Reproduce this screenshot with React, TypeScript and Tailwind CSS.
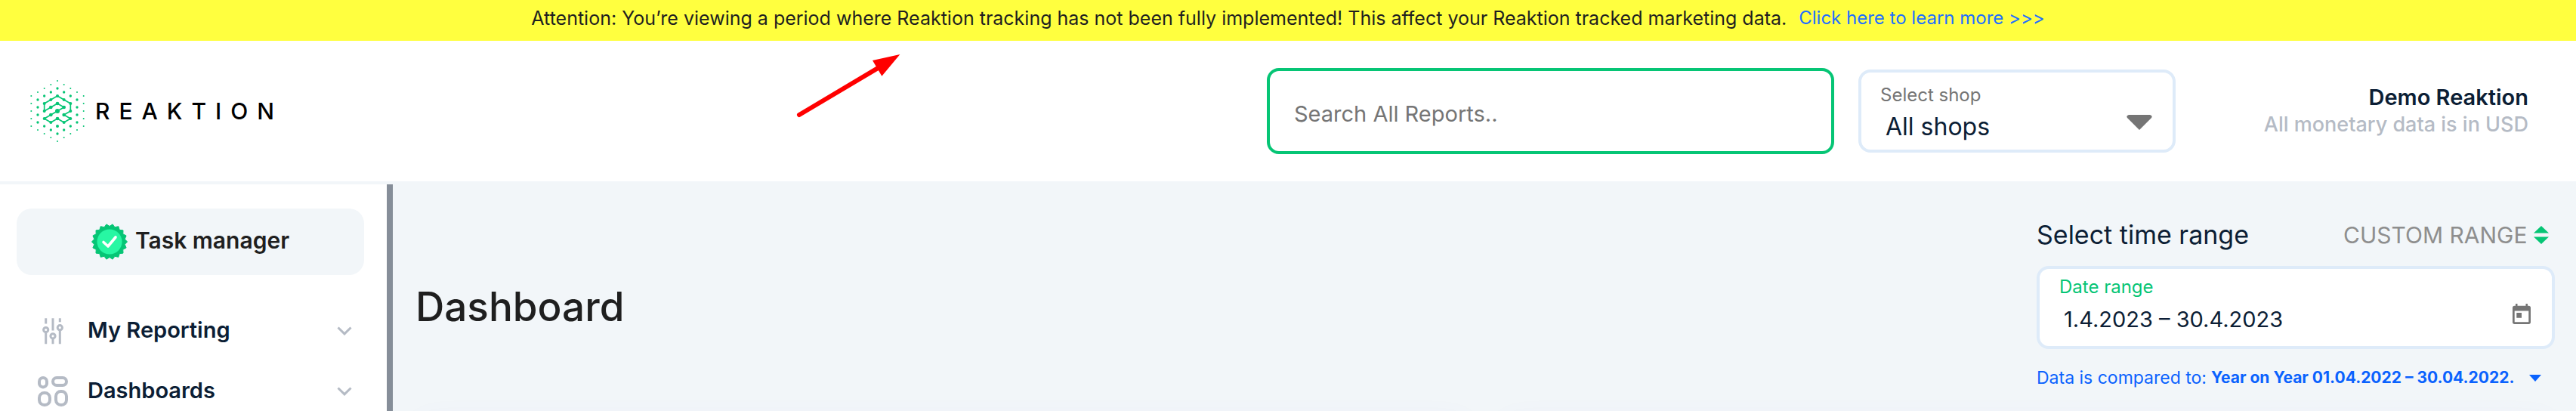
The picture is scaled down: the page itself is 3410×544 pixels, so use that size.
import { ReactNode } from "react";

const LOGO_PATH =
  "M70 135V105L96 90L122 75L148 90L174 105V135L148 150L174 165L148 180L122 165L96 180L70 165L96 150L122 135L148 120L122 105L96 120Z";

const logoDots = () => {
  const dots: { x: number; y: number; r: number }[] = [];
  for (let col = -4; col <= 4; col++) {
    const reach = 120 - Math.abs(col) * 15;
    for (let dy = -reach; dy <= reach; dy += 30) {
      const ring = Math.max(Math.abs(col), (Math.abs(dy) + Math.abs(col) * 15) / 30);
      dots.push({ x: 122 + col * 26, y: 135 + dy, r: [9, 7, 6, 5, 3][Math.round(ring)] });
    }
  }
  return dots;
};

const Logo = () => (
  <a href="#" className="flex items-center gap-[14px] text-black">
    <svg width="72" height="82" viewBox="14 12 216 246" aria-hidden="true">
      <path d={LOGO_PATH} fill="none" stroke="#06c575" strokeWidth="5" strokeLinejoin="round" />
      {logoDots().map((dot) => (
        <circle key={`${dot.x}-${dot.y}`} cx={dot.x} cy={dot.y} r={dot.r} fill="#06c575" />
      ))}
    </svg>
    <span className="text-3xl leading-9 font-medium tracking-[12px]">REAKTION</span>
  </a>
);

const badgePoints = Array.from({ length: 36 }, (_, i) => {
  const angle = (i * Math.PI) / 18;
  const radius = i % 2 === 0 ? 23.5 : 20.5;
  return `${24 + radius * Math.cos(angle)},${24 + radius * Math.sin(angle)}`;
}).join(" ");

const TaskBadge = () => (
  <svg width="48" height="48" viewBox="0 0 48 48" aria-hidden="true">
    <polygon points={badgePoints} fill="#06c575" stroke="#06c575" strokeLinejoin="round" />
    <circle cx="24" cy="24" r="16.5" fill="#27f7a3" />
    <path d="M16 24.5L22 30L32 18" fill="none" stroke="#fff" strokeWidth="3.6" strokeLinecap="round" strokeLinejoin="round" />
  </svg>
);

const SlidersIcon = () => (
  <svg width="40" height="40" viewBox="0 0 40 40" fill="none" stroke="#b5bbc5" strokeWidth="3" aria-hidden="true">
    <path d="M10.7 3.3V10.5M10.7 22V37.3M20 3.3V19.5M20 30.5V37.3M29.3 3.3V8.3M29.3 19V37.3" />
    <circle cx="10.7" cy="18.5" r="3.1" />
    <circle cx="20" cy="26.8" r="3.1" />
    <circle cx="29.3" cy="15.7" r="3.1" />
  </svg>
);

const GridIcon = () => (
  <svg width="40" height="40" viewBox="0 0 40 40" fill="none" stroke="#b5bbc5" strokeWidth="4" aria-hidden="true">
    <rect x="2" y="2" width="10" height="12.4" rx="5" />
    <rect x="20" y="2" width="18" height="10" rx="5" />
    <rect x="2" y="22" width="14" height="16" rx="6.5" />
    <rect x="24" y="20" width="14" height="18" rx="6.5" />
  </svg>
);

const ChevronIcon = () => (
  <svg width="20" height="12" viewBox="0 0 20 12" fill="none" stroke="#b5bbc5" strokeWidth="3" aria-hidden="true">
    <path d="M1.5 1.5L10 9.8L18.5 1.5" />
  </svg>
);

const CalendarIcon = () => (
  <svg width="24" height="27" viewBox="0 0 24 27" aria-hidden="true">
    <path
      fillRule="evenodd"
      fill="#757575"
      d="M4 0H6.5V2.7H17.5V0H20V2.7H21.3A2.7 2.7 0 0 1 24 5.4V24.3A2.7 2.7 0 0 1 21.3 27H2.7A2.7 2.7 0 0 1 0 24.3V5.4A2.7 2.7 0 0 1 2.7 2.7H4ZM2.7 9.4V24.3H21.3V9.4ZM5.3 12H12V18.7H5.3Z"
    />
  </svg>
);

const NavItem: React.FC<{ icon: ReactNode; label: string }> = ({ icon, label }) => (
  <li>
    <button type="button" className="flex h-20 w-full items-center gap-[26px] pr-4 pl-7 text-left">
      {icon}
      <span className="flex-1 pb-0.5 text-[29px] leading-9 font-semibold text-[#0c1e35]">{label}</span>
      <ChevronIcon />
    </button>
  </li>
);

const Banner = () => (
  <div className="flex shrink-0 justify-center gap-4 bg-[#ffff3f] pt-2 pb-[14px] leading-8 whitespace-nowrap">
    <p className="text-[25px] text-[#1f1f1f]">
      Attention: You’re viewing a period where Reaktion tracking has not been fully implemented! This affect your
      Reaktion tracked marketing data.
    </p>
    <a href="#" className="text-2xl leading-8 text-[#1f6fff]">
      Click here to learn more &gt;&gt;&gt;
    </a>
  </div>
);

const Header = () => (
  <header className="flex h-[190px] shrink-0 items-center border-b-4 border-[#f2f6f9] bg-white pr-[63px] pl-10">
    <Logo />
    <div className="ml-auto flex items-center gap-8">
      <input
        type="search"
        aria-label="Search All Reports"
        placeholder="Search All Reports.."
        className="h-[114px] w-[751px] rounded-2xl border-4 border-[#06c575] bg-white pt-1.5 pr-8 pl-8 text-[29px] text-[#0c1e35] outline-none placeholder:text-[#757575]"
      />
      <div className="relative h-[110px] w-[420px] rounded-2xl border-4 border-[#deebf9] bg-white pt-[14px]">
        <label htmlFor="shop" className="block pl-[25px] text-2xl leading-8 text-[#757575]">
          Select shop
        </label>
        <select
          id="shop"
          className="mt-1.5 h-10 w-full appearance-none bg-transparent pl-8 text-[32px] leading-10 text-[#0c1e35] outline-none"
        >
          <option>All shops</option>
        </select>
        <svg
          width="34"
          height="20"
          viewBox="0 0 34 20"
          aria-hidden="true"
          className="pointer-events-none absolute top-14 right-[27px]"
        >
          <path d="M3 0H31Q35 1 33 4L17 20L1 4Q-1 1 3 0Z" fill="#757575" />
        </svg>
      </div>
    </div>
    <div className="w-[467px] text-right leading-9">
      <p className="text-[29px] font-semibold text-[#0c1e35]">Demo Reaktion</p>
      <p className="text-[27px] font-medium text-[#b5bbc5]">All monetary data is in USD</p>
    </div>
  </header>
);

const Sidebar = () => (
  <aside className="w-[520px] shrink-0 border-r-8 border-[#868e99] bg-white pt-8 pr-[30px] pl-[22px]">
    <button
      type="button"
      className="flex h-[88px] w-full items-center justify-center gap-[10px] rounded-[20px] bg-[#f2f6f9] text-[#1f1f1f]"
    >
      <TaskBadge />
      <span className="pb-1 text-3xl leading-9 font-semibold">Task manager</span>
    </button>
    <ul className="mt-[34px]">
      <NavItem icon={<SlidersIcon />} label="My Reporting" />
      <NavItem icon={<GridIcon />} label="Dashboards" />
    </ul>
  </aside>
);

const TimeRange = () => (
  <section className="w-[686px]">
    <div className="flex items-center justify-between pr-2">
      <h2 className="text-[34px] leading-10 text-[#0c1e35]">Select time range</h2>
      <div className="flex items-center gap-2">
        <select
          aria-label="Time range"
          className="h-10 appearance-none bg-transparent text-3xl leading-10 text-[#8e8e8e] outline-none"
        >
          <option>CUSTOM RANGE</option>
        </select>
        <svg width="20" height="24" viewBox="0 0 20 24" fill="#06c575" aria-hidden="true">
          <path d="M10 0L20 9.5H0ZM0 14.5H20L10 24Z" />
        </svg>
      </div>
    </div>
    <div className="relative mt-[21px] h-[110px] rounded-2xl border-4 border-[#deebf9] bg-white pt-2">
      <label htmlFor="dates" className="block pl-[26px] text-2xl leading-8 text-[#06c575]">
        Date range
      </label>
      <input
        id="dates"
        type="text"
        defaultValue="1.4.2023 – 30.4.2023"
        className="mt-[7px] h-10 w-full bg-transparent pl-8 text-[29px] leading-10 text-[#0c1e35] outline-none"
      />
      <button type="button" aria-label="Open calendar" className="absolute top-[46px] right-7">
        <CalendarIcon />
      </button>
    </div>
    <button type="button" className="mt-[22px] flex items-center text-[#0a62fe]">
      <span className="text-[23px] leading-8">Data is compared to:</span>
      <span className="ml-1.5 text-[21px] leading-8 font-bold">Year on Year 01.04.2022 – 30.04.2022.</span>
      <svg width="16" height="9" viewBox="0 0 16 9" fill="currentColor" aria-hidden="true" className="ml-5">
        <path d="M0 0H16L8 9Z" />
      </svg>
    </button>
  </section>
);

const App = () => {
  return (
    <div className="relative flex h-screen flex-col overflow-hidden bg-[#f2f6f9] font-['Inter',sans-serif]">
      <Banner />
      <Header />
      <div className="flex flex-1">
        <Sidebar />
        <main className="flex-1 pt-[47px] pr-7 pl-[30px]">
          <div className="flex items-center justify-between">
            <h1 className="pt-1 text-[53px] leading-[64px] font-medium text-[#1f1f1f]">Dashboard</h1>
            <TimeRange />
          </div>
          <div className="mt-10 grid grid-cols-2 gap-10">
            <div className="h-80 rounded-[20px] bg-white shadow-[0_0_40px_rgba(90,70,220,0.04)]" />
            <div className="h-80 rounded-[20px] bg-white shadow-[0_0_40px_rgba(90,70,220,0.04)]" />
          </div>
        </main>
      </div>
      <svg
        width="170"
        height="104"
        viewBox="0 0 510 312"
        aria-hidden="true"
        className="pointer-events-none absolute top-[60px] left-[1040px]"
      >
        <path d="M54 276L370 88" stroke="#f00" strokeWidth="18" strokeLinecap="round" />
        <path d="M454 36L345 60L382 122Z" fill="#f00" />
      </svg>
    </div>
  );
};

export default App;
